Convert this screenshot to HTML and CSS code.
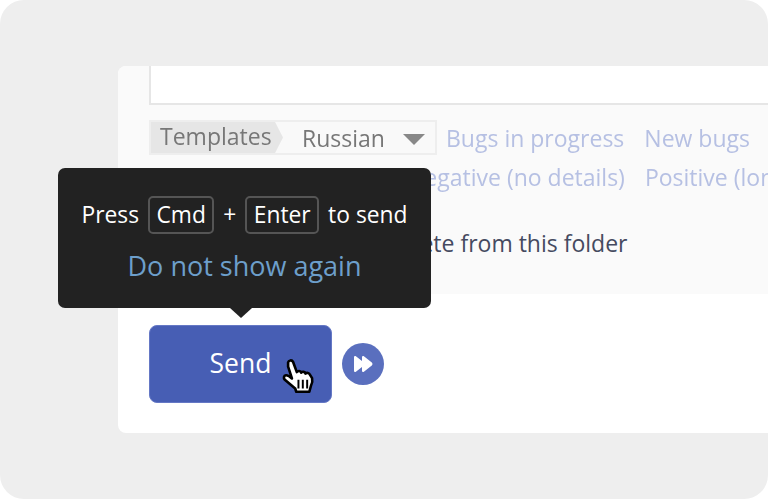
FILE: index.html
```html
<!DOCTYPE html>
<html lang="en">
<head>
<meta charset="UTF-8">
<title>Send hint</title>
<link rel="stylesheet" href="styles.css">
</head>
<body>
  <div class="stage">
    <div class="card">
      <div class="panel">
        <div class="editor"></div>
        <div class="tpl-row">
          <div class="tpl-select">
            <span class="tpl-label">Templates</span>
            <span class="tpl-value">Russian</span>
            <span class="tpl-caret"></span>
          </div>
          <a class="tpl-link">Bugs in progress</a>
          <a class="tpl-link">New bugs</a>
        </div>
        <div class="tpl-row second">
          <a class="tpl-link wide">Positive with details</a>
          <a class="tpl-link">Negative (no details)</a>
          <a class="tpl-link">Positive (long)</a>
        </div>
        <div class="folder-note">Delete from this folder</div>
      </div>
      <div class="actions">
        <button class="send">Send</button>
        <span class="send-next">
          <svg width="20" height="18" viewBox="0 0 20 18"><path d="M1 2.200c0-1 1.100-1.600 1.900-1L9 6V2.200c0-1 1.100-1.600 1.900-1l7.900 6.300c.9.800.9 2.200 0 3l-7.900 6.300c-.8.600-1.900 0-1.900-1V12l-6.100 4.800c-.8.600-1.900 0-1.900-1z" fill="#fff"/></svg>
        </span>
      </div>
    </div>
    <div class="tooltip">
      <div class="tip-line">Press <kbd>Cmd</kbd> + <kbd>Enter</kbd> to send</div>
      <a class="tip-link">Do not show again</a>
    </div>
    <svg class="cursor" width="34" height="37" viewBox="0 0 31 34">
      <path d="M5.500 4c.5-2 3.500-2.500 4.500-.5l3.500 9.500c1-1.500 3.500-1.500 4 .5 1-1.300 3.500-1 4 .8 1-1 3.500-.8 4 1l2 3.200c.5 2 0 5-1 7l-1.500 5.500H13l-1-3-9.500-8c-1.500-1.500-1-4 1-4.200 1.500-.1 3.500 1 5.500 3L5.500 8z" fill="#fff" stroke="#000" stroke-width="2.400" stroke-linejoin="round"/>
      <path d="M15 20v8M19 20v8M23 20v8" stroke="#000" stroke-width="1.800" fill="none"/>
    </svg>
  </div>
</body>
</html>
```

FILE: styles.css
```css
*{ box-sizing:border-box; }
html, body{ margin:0; padding:0; background:#fff; }
body{
  font-family:"Open Sans", sans-serif;
  width:768px; height:499px; overflow:hidden;
}
.stage{
  position:relative;
  width:768px; height:499px; overflow:hidden;
  background:#eee; border-radius:24px;
  padding:66px 0 0 118px;
}
.card{
  width:700px; height:367px; background:#fff;
  border-radius:8px 0 0 8px; overflow:hidden;
}
.panel{
  height:228px; background:#fafafa;
  padding:0 0 0 31px;
}
.editor{
  height:39px; background:#fff;
  border:2px solid #e6e6e6; border-top:0; border-right:0;
}
.tpl-row{
  display:flex; align-items:center; gap:20px;
  margin-top:15px; height:35px; white-space:nowrap;
  filter:blur(.4px);
}
.tpl-row.second{ margin-top:4px; }
.tpl-select{
  display:flex; align-items:center;
  width:288px; height:35px; margin-right:-11px;
  border:2px solid #eee; color:#777; font-size:23px;
  background:#f9f9f9;
}
.tpl-label{
  background:#e6e6e6; height:31px; line-height:29px;
  padding:0 0 0 9px;
  width:132px;
  clip-path:polygon(0 0, 94% 0, 100% 50%, 94% 100%, 0 100%);
}
.tpl-value{ margin-left:19px; }
.tpl-caret{
  margin-left:18px; margin-top:3px;
  border:11px solid transparent; border-top:11px solid #888; border-bottom:0;
}
.tpl-link{ color:#b6c0e3; font-size:23px; }
.tpl-link.wide{ width:238px; overflow:hidden; }
.folder-note{
  margin:33px 0 0 236px; color:#454a60; font-size:23px; white-space:nowrap;
}
.actions{
  display:flex; align-items:center; gap:10px;
  padding:31px 0 0 31px;
}
.send{
  width:183px; height:78px; border:1px solid #6578c5; border-radius:8px;
  background:#475eb4; color:#fff; font:26.500px "Open Sans", sans-serif;
  padding:0 0 2px 0; text-align:center;
}
.send-next{
  display:flex; align-items:center; justify-content:center;
  width:42px; height:42px; border-radius:50%; background:#5a6fbe;
}
.tooltip{
  position:absolute; left:58px; top:168px;
  width:373px; height:140px; padding-top:28px;
  background:#222; border-radius:7px; text-align:center;
}
.tooltip::after{
  content:""; position:absolute; left:172px; bottom:-10px;
  border:11px solid transparent; border-top:10px solid #222; border-bottom:0;
}
.tip-line{ color:#fff; font-size:22.800px; line-height:38px; white-space:nowrap; }
kbd{
  display:inline-block; font:inherit; line-height:34px; height:38px;
  padding:0 6.500px; margin:0 3px;
  border:2px solid #555; border-radius:5px;
}
.tip-link{ display:block; margin-top:13px; color:#6d9fcb; font-size:27px; line-height:38px; }
.cursor{ position:absolute; left:282px; top:358px; }
```
